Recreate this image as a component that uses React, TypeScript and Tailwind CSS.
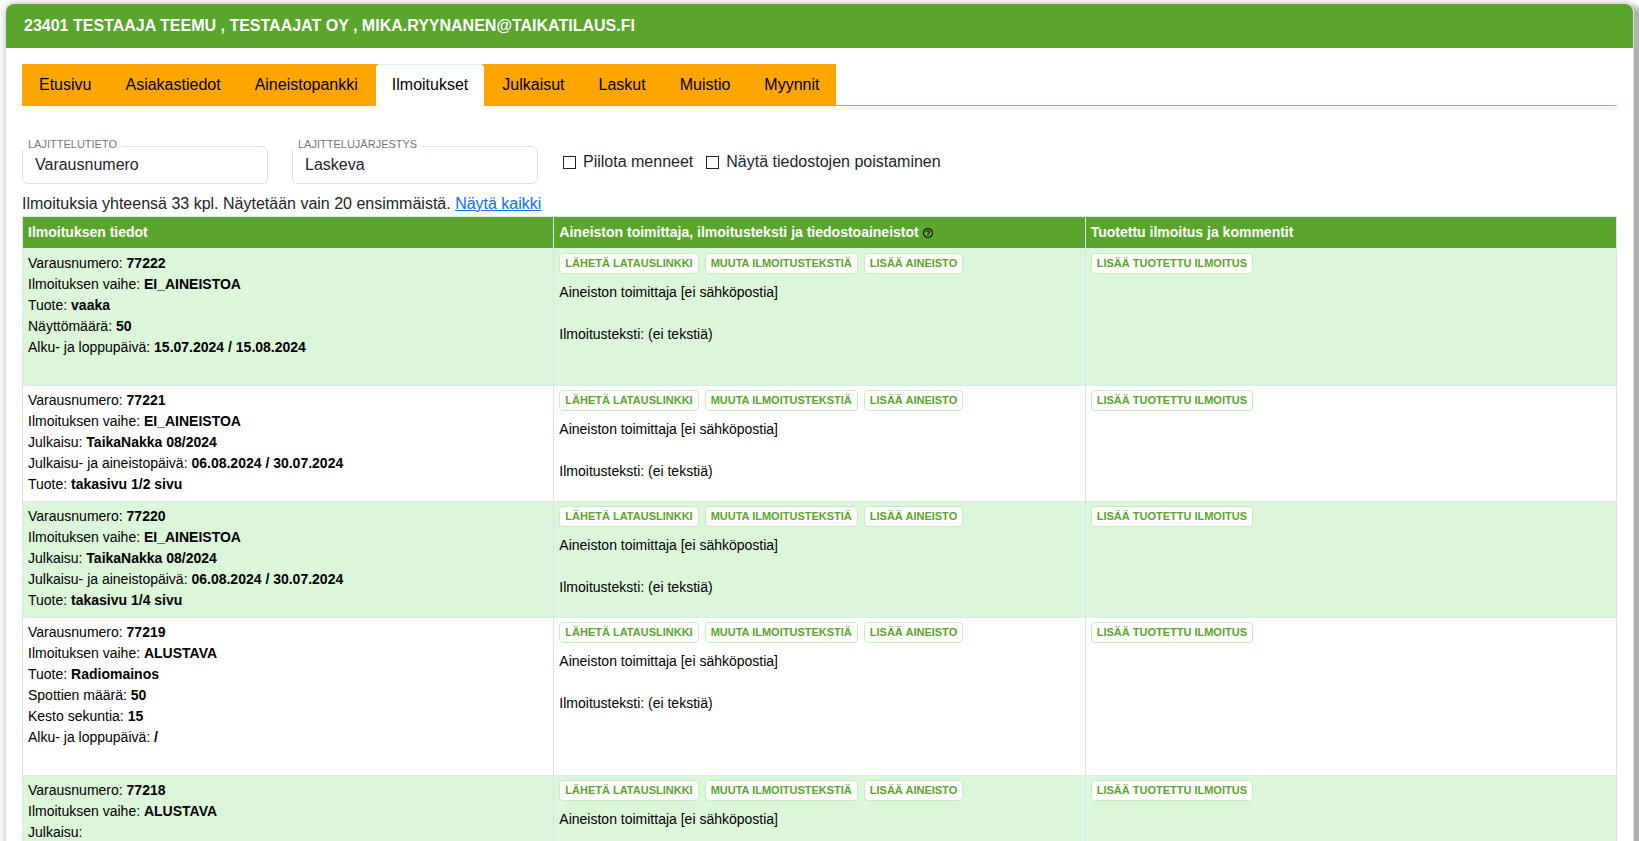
import React from "react";

type Field = [label: string, value: string];

type Booking = {
  id: string;
  fields: Field[];
  adText?: string;
  trailingSpace?: boolean;
};

const tabs = [
  "Etusivu",
  "Asiakastiedot",
  "Aineistopankki",
  "Ilmoitukset",
  "Julkaisut",
  "Laskut",
  "Muistio",
  "Myynnit",
];
const activeTab = "Ilmoitukset";

const bookings: Booking[] = [
  {
    id: "77222",
    fields: [
      ["Ilmoituksen vaihe:", "EI_AINEISTOA"],
      ["Tuote:", "vaaka"],
      ["Näyttömäärä:", "50"],
      ["Alku- ja loppupäivä:", "15.07.2024 / 15.08.2024"],
    ],
    adText: "(ei tekstiä)",
    trailingSpace: true,
  },
  {
    id: "77221",
    fields: [
      ["Ilmoituksen vaihe:", "EI_AINEISTOA"],
      ["Julkaisu:", "TaikaNakka 08/2024"],
      ["Julkaisu- ja aineistopäivä:", "06.08.2024 / 30.07.2024"],
      ["Tuote:", "takasivu 1/2 sivu"],
    ],
    adText: "(ei tekstiä)",
  },
  {
    id: "77220",
    fields: [
      ["Ilmoituksen vaihe:", "EI_AINEISTOA"],
      ["Julkaisu:", "TaikaNakka 08/2024"],
      ["Julkaisu- ja aineistopäivä:", "06.08.2024 / 30.07.2024"],
      ["Tuote:", "takasivu 1/4 sivu"],
    ],
    adText: "(ei tekstiä)",
  },
  {
    id: "77219",
    fields: [
      ["Ilmoituksen vaihe:", "ALUSTAVA"],
      ["Tuote:", "Radiomainos"],
      ["Spottien määrä:", "50"],
      ["Kesto sekuntia:", "15"],
      ["Alku- ja loppupäivä:", "/"],
    ],
    adText: "(ei tekstiä)",
    trailingSpace: true,
  },
  {
    id: "77218",
    fields: [
      ["Ilmoituksen vaihe:", "ALUSTAVA"],
      ["Julkaisu:", ""],
    ],
    trailingSpace: true,
  },
];

function SortSelect({ id, label, options }: { id: string; label: string; options: string[] }) {
  return (
    <div className="relative w-[246px]">
      <label
        htmlFor={id}
        className="absolute -top-[7px] left-0 bg-white pr-[5px] pl-1.5 text-[11px] leading-[11px] text-[#777777] uppercase"
      >
        {label}
      </label>
      <select
        id={id}
        className="block h-[38px] w-full appearance-none rounded-md border border-[#dee2e6] bg-white px-3 text-base text-[#212529]"
      >
        {options.map((option) => (
          <option key={option}>{option}</option>
        ))}
      </select>
    </div>
  );
}

function CheckOption({ id, label }: { id: string; label: string }) {
  return (
    <div className="flex items-center gap-[7px]">
      <input
        id={id}
        type="checkbox"
        className="size-[13px] appearance-none border border-[#212529] bg-white checked:bg-[#5aa52c]"
      />
      <label htmlFor={id}>{label}</label>
    </div>
  );
}

function SmallButton({ children }: { children: React.ReactNode }) {
  return (
    <button
      type="button"
      className="block h-[21px] rounded border border-[#c4efbb] bg-white px-[5px] text-[11px] leading-[19px] font-bold whitespace-nowrap text-[#5aa52c] uppercase"
    >
      {children}
    </button>
  );
}

function HelpIcon() {
  return (
    <svg
      viewBox="0 0 24 24"
      className="ml-[3px] inline-block size-3 align-[-2px] text-black"
      fill="currentColor"
      aria-hidden="true"
    >
      <path d="M11 18h2v-2h-2v2zm1-16C6.48 2 2 6.48 2 12s4.48 10 10 10 10-4.48 10-10S17.52 2 12 2zm0 18c-4.41 0-8-3.59-8-8s3.59-8 8-8 8 3.59 8 8-3.59 8-8 8zm0-14c-2.21 0-4 1.79-4 4h2c0-1.1.9-2 2-2s2 .9 2 2c0 2-3 1.75-3 5h2c0-2.25 3-2.5 3-5 0-2.21-1.79-4-4-4z" />
    </svg>
  );
}

const headCell = "border border-x-[#dee2e6] border-y-[#dbe9f4] p-[5px] text-left align-top";
const bodyCell = "border border-x-[#dee2e6] border-y-[#dbe9f4] px-[5px] pt-1 pb-1.5 text-left align-top";

function BookingRow({ booking }: { booking: Booking }) {
  return (
    <tr className="odd:bg-[#dcf6d9] even:bg-white">
      <td className={bodyCell}>
        <p>
          Varausnumero: <b>{booking.id}</b>
        </p>
        {booking.fields.map(([label, value]) => (
          <p key={label}>
            {label} <b>{value}</b>
          </p>
        ))}
        {booking.trailingSpace && <br />}
      </td>
      <td className={bodyCell}>
        <div className="mb-2 flex gap-1.5">
          <SmallButton>Lähetä latauslinkki</SmallButton>
          <SmallButton>Muuta ilmoitustekstiä</SmallButton>
          <SmallButton>Lisää aineisto</SmallButton>
        </div>
        <p>Aineiston toimittaja [ei sähköpostia]</p>
        {booking.adText && <p className="mt-[21px]">Ilmoitusteksti: {booking.adText}</p>}
      </td>
      <td className={bodyCell}>
        <SmallButton>Lisää tuotettu ilmoitus</SmallButton>
      </td>
    </tr>
  );
}

export default function App() {
  return (
    <div className="h-screen overflow-hidden bg-white pt-1 pr-[5px] pl-1.5 font-['Liberation_Sans',Arial,sans-serif] text-base text-[#212529]">
      <main className="min-h-screen rounded-t-lg border-r border-[#dedede] bg-white shadow-[8px_3px_4px_#b0b0b0,0_0_8px_rgba(0,0,0,0.3)]">
        <header className="rounded-t-lg bg-[#5aa52c] px-[18px] py-[10px]">
          <h1 className="text-base leading-6 font-bold text-white uppercase">
            23401 Testaaja Teemu , Testaajat Oy , mika.ryynanen@taikatilaus.fi
          </h1>
        </header>

        <div className="px-4 pt-[14px]">
          <nav className="mt-0.5 flex border-b border-[#ffa500]">
            {tabs.map((tab) => (
              <a
                key={tab}
                href="#"
                aria-current={tab === activeTab ? "page" : undefined}
                className={
                  tab === activeTab
                    ? "-mb-px bg-[#ffa500] px-px leading-6 text-black"
                    : "bg-[#ffa500] px-[17px] pt-[9px] pb-2 leading-6 text-black"
                }
              >
                {tab === activeTab ? (
                  <span className="block rounded-t border-t border-[#dcf6e4] bg-white px-4 pt-2 pb-[9px]">{tab}</span>
                ) : (
                  tab
                )}
              </a>
            ))}
          </nav>

          <form className="mt-10 flex gap-6">
            <SortSelect id="sort-field" label="Lajittelutieto" options={["Varausnumero", "Julkaisu"]} />
            <SortSelect id="sort-order" label="Lajittelujärjestys" options={["Laskeva", "Nouseva"]} />
            <div className="ml-px flex h-8 items-center gap-[13px]">
              <CheckOption id="hide-past" label="Piilota menneet" />
              <CheckOption id="show-file-removal" label="Näytä tiedostojen poistaminen" />
            </div>
          </form>

          <p className="mt-2 leading-6">
            Ilmoituksia yhteensä 33 kpl. Näytetään vain 20 ensimmäistä.{" "}
            <a href="#" className="text-[#0d6efd] underline">
              Näytä kaikki
            </a>
          </p>

          <table className="w-full table-fixed border-collapse text-sm leading-[21px] text-black">
            <thead>
              <tr className="bg-[#5aa52c] text-white">
                <th className={headCell}>Ilmoituksen tiedot</th>
                <th className={headCell}>
                  Aineiston toimittaja, ilmoitusteksti ja tiedostoaineistot
                  <HelpIcon />
                </th>
                <th className={headCell}>Tuotettu ilmoitus ja kommentit</th>
              </tr>
            </thead>
            <tbody>
              {bookings.map((booking) => (
                <BookingRow key={booking.id} booking={booking} />
              ))}
            </tbody>
          </table>
        </div>
      </main>
    </div>
  );
}
